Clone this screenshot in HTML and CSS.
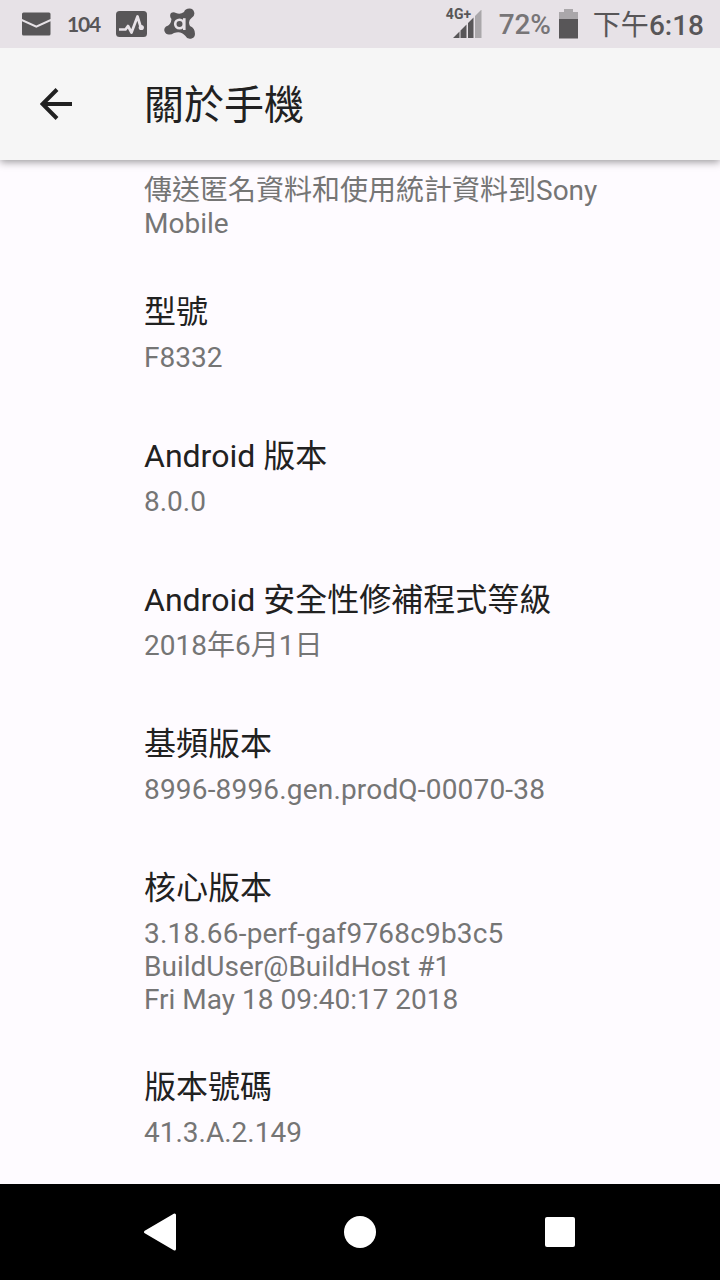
FILE: index.html
```html
<!DOCTYPE html>
<html lang="zh-Hant">
<head>
<meta charset="UTF-8" />
<title>關於手機</title>
<link rel="stylesheet" href="styles.css">
</head>
<body>
  <div class="status-bar">
    <div class="notifications">
      <svg class="icon-mail" width="29" height="24" viewBox="0 0 29 24">
        <path d="M1.500 .5h25.500a1.500 1.500 0 0 1 1.500 1.500v5L14.300 13.500 0 7V2A1.500 1.500 0 0 1 1.500 .5z" />
        <path d="M0 9.300l14.300 6.500 14.200-6.500V22a1.500 1.500 0 0 1-1.500 1.500H1.500A1.500 1.500 0 0 1 0 22z" />
      </svg>
      <span class="icon-104">104</span>
      <svg class="icon-pulse" width="32" height="26" viewBox="0 0 32 26">
        <rect width="31" height="26" rx="3.500" />
        <path class="pulse-line" d="M3 18.500h6.500l2.500-3.500 3.500 6.500 6-16L25 17" />
        <circle class="pulse-dot" cx="25.300" cy="16.500" r="2.600" />
      </svg>
      <svg class="icon-avast" width="32" height="32" viewBox="0 0 32 32">
        <path d="M7 5Q9.500 3.500 12 5Q16 7 20 4Q21 .5 25.500 .5A5 5 0 0 1 27.500 10Q23.500 13 26 18Q31 20 31 26A5 5 0 0 1 21.500 28Q17 22.500 10 25Q7 27 5 26.500A4.500 4.500 0 0 1 2 18.500Q7 17 7.500 11Q5 8 7 5z" />
        <circle class="a-ring" cx="15.500" cy="16" r="4.300" />
        <path class="a-ring" d="M20.300 10.200V22" />
      </svg>
    </div>
    <div class="status">
      <div class="signal">
        <span class="network">4G+</span>
        <svg width="30" height="29" viewBox="0 0 30 29">
          <path d="M0 28l6.500-6.500V28zM7.500 20.500l6-6V28h-6zM15 13l5.500-5.500V28H15z" />
          <path class="faded" d="M22 6l6.500-6.500V28H22z" />
        </svg>
      </div>
      <span class="percent">72%</span>
      <svg class="battery" width="19" height="30" viewBox="0 0 19 30">
        <path class="faded" d="M5 0h9v3h5v8H0V3h5z" />
        <path d="M0 10h19v19.500H0z" />
      </svg>
      <span class="clock"><span class="noon">下午</span>6:18</span>
    </div>
  </div>

  <div class="toolbar">
    <svg class="back" width="32" height="32" viewBox="0 0 32 32">
      <path d="M32 16H3M17 1.500L2.500 16 17 30.500" />
    </svg>
    <h1>關於手機</h1>
  </div>

  <div class="list">
    <div class="item first">
      <p>傳送匿名資料和使用統計資料到Sony<br>Mobile</p>
    </div>
    <div class="item">
      <h2>型號</h2>
      <p>F8332</p>
    </div>
    <div class="item">
      <h2>Android 版本</h2>
      <p>8.0.0</p>
    </div>
    <div class="item">
      <h2>Android 安全性修補程式等級</h2>
      <p>2018年6月1日</p>
    </div>
    <div class="item">
      <h2>基頻版本</h2>
      <p><span class="wide">8996-8996.gen.prodQ-00070-38</span></p>
    </div>
    <div class="item">
      <h2>核心版本</h2>
      <p><span class="wide">3.18.66-perf-gaf9768c9b3c5</span><br>BuildUser@BuildHost #1<br>Fri May 18 09:40:17 2018</p>
    </div>
    <div class="item">
      <h2>版本號碼</h2>
      <p>41.3.A.2.149</p>
    </div>
  </div>

  <div class="nav-bar">
    <svg width="34" height="40" viewBox="0 0 34 40">
      <path d="M2.500 20L31.500 3v34z" />
    </svg>
    <svg width="34" height="40" viewBox="0 0 34 40">
      <circle cx="17" cy="20" r="16" />
    </svg>
    <svg width="34" height="40" viewBox="0 0 34 40">
      <rect x="2" y="5" width="30" height="30" rx="2" />
    </svg>
  </div>
</body>
</html>
```
FILE: styles.css
```css
* {
  box-sizing: border-box;
}
body {
  margin: 0;
  height: 1280px;
  display: flex;
  flex-direction: column;
  overflow: hidden;
  background: #fefbff;
  font-family: Roboto, "Noto Sans CJK TC", sans-serif;
  color: #212121;
}
h1, h2, p {
  margin: 0;
  font-weight: 400;
  white-space: nowrap;
}

/* Status bar */
.status-bar {
  height: 48px;
  flex: none;
  display: flex;
  justify-content: space-between;
  align-items: center;
  padding: 0 16px 0 22px;
  background: #e7e2e7;
  color: #585658;
  fill: #585658;
}
.notifications,
.status {
  display: flex;
  align-items: center;
}
.icon-104 {
  width: 34px;
  margin-left: 16px;
  padding-bottom: 2px;
  font-family: Lato, sans-serif;
  font-size: 21px;
  font-weight: 700;
  letter-spacing: -1.2px;
}
.icon-pulse {
  margin-left: 15px;
}
.pulse-line {
  fill: none;
  stroke: #e7e2e7;
  stroke-width: 2.7;
  stroke-linejoin: round;
}
.pulse-dot {
  fill: #e7e2e7;
}
.icon-avast {
  margin-left: 16px;
}
.a-ring {
  fill: none;
  stroke: #e7e2e7;
  stroke-width: 2.6;
}
.signal {
  position: relative;
  display: flex;
  margin-right: 16px;
}
.network {
  position: absolute;
  left: -7px;
  top: -3px;
  font-size: 14px;
  line-height: 14px;
  font-weight: 700;
}
.faded {
  fill: #aaa7aa;
}
.percent {
  width: 60px;
  padding-top: 1px;
  font-size: 28px;
  font-weight: 500;
  letter-spacing: -0.2px;
  color: #777577;
}
.clock {
  margin-left: 15px;
  padding-top: 3px;
  font-size: 28px;
  font-weight: 500;
  line-height: 34px;
  white-space: nowrap;
}
.noon {
  font-weight: 400;
}

/* Title bar */
.toolbar {
  position: relative;
  height: 112px;
  flex: none;
  display: flex;
  align-items: center;
  padding-left: 40px;
  background: #f6f6f6;
  box-shadow: 0 2px 8px rgba(0, 0, 0, 0.4);
  clip-path: inset(0 0 -14px 0);
}
.back {
  margin-right: 72px;
  fill: none;
  stroke: #212121;
  stroke-width: 4;
}
.toolbar h1 {
  padding-top: 4px;
  font-size: 40px;
  line-height: 48px;
}

/* Settings list */
.list {
  flex: 1;
  min-height: 0;
  overflow: hidden;
}
.item {
  min-height: 144px;
  padding: 32px 0 20px 144px;
}
.item.first {
  min-height: 0;
  padding-top: 14px;
  padding-bottom: 21px;
}
.item h2 {
  font-size: 32px;
  line-height: 38px;
  margin-bottom: 10px;
}
.item p {
  font-size: 28px;
  line-height: 33px;
  color: #757575;
}
.item .wide {
  letter-spacing: 0.18px;
}

/* Navigation bar */
.nav-bar {
  height: 96px;
  flex: none;
  display: flex;
  justify-content: space-between;
  align-items: center;
  padding: 0 143px;
  background: #000;
  fill: #fff;
}
.nav-bar path {
  stroke: #fff;
  stroke-width: 3;
  stroke-linejoin: round;
}
```
